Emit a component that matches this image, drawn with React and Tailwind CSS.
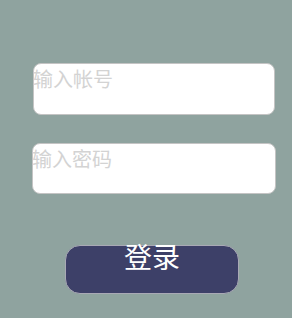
export default function App() {
  const font = { fontFamily: '"Noto Sans CJK SC", "Noto Sans", sans-serif' };
  return (
    <div className="w-[292px] h-[318px] bg-[#8fa39f] flex flex-col pt-[63px]" style={font}>
      <div className="ml-[33px] w-[242px] h-[52px] bg-white rounded-[8px] border border-[#c4c4c4] flex items-start">
        <span className="text-[20px] leading-[30px] text-[#d3d3d3] -ml-[1px]">输入帐号</span>
      </div>
      <div className="mt-[28px] ml-[32px] w-[244px] h-[51px] bg-white rounded-[8px] border border-[#c4c4c4] flex items-start">
        <span className="text-[20px] leading-[30px] text-[#d3d3d3] -ml-[1px]">输入密码</span>
      </div>
      <div className="mt-[51px] ml-[65px] w-[174px] h-[49px] bg-[#3d4068] rounded-[15px] border border-[#a9a9b5] flex justify-center items-start">
        <span className="text-[28px] leading-[28px] text-white -mt-[4px]">登录</span>
      </div>
    </div>
  );
}
